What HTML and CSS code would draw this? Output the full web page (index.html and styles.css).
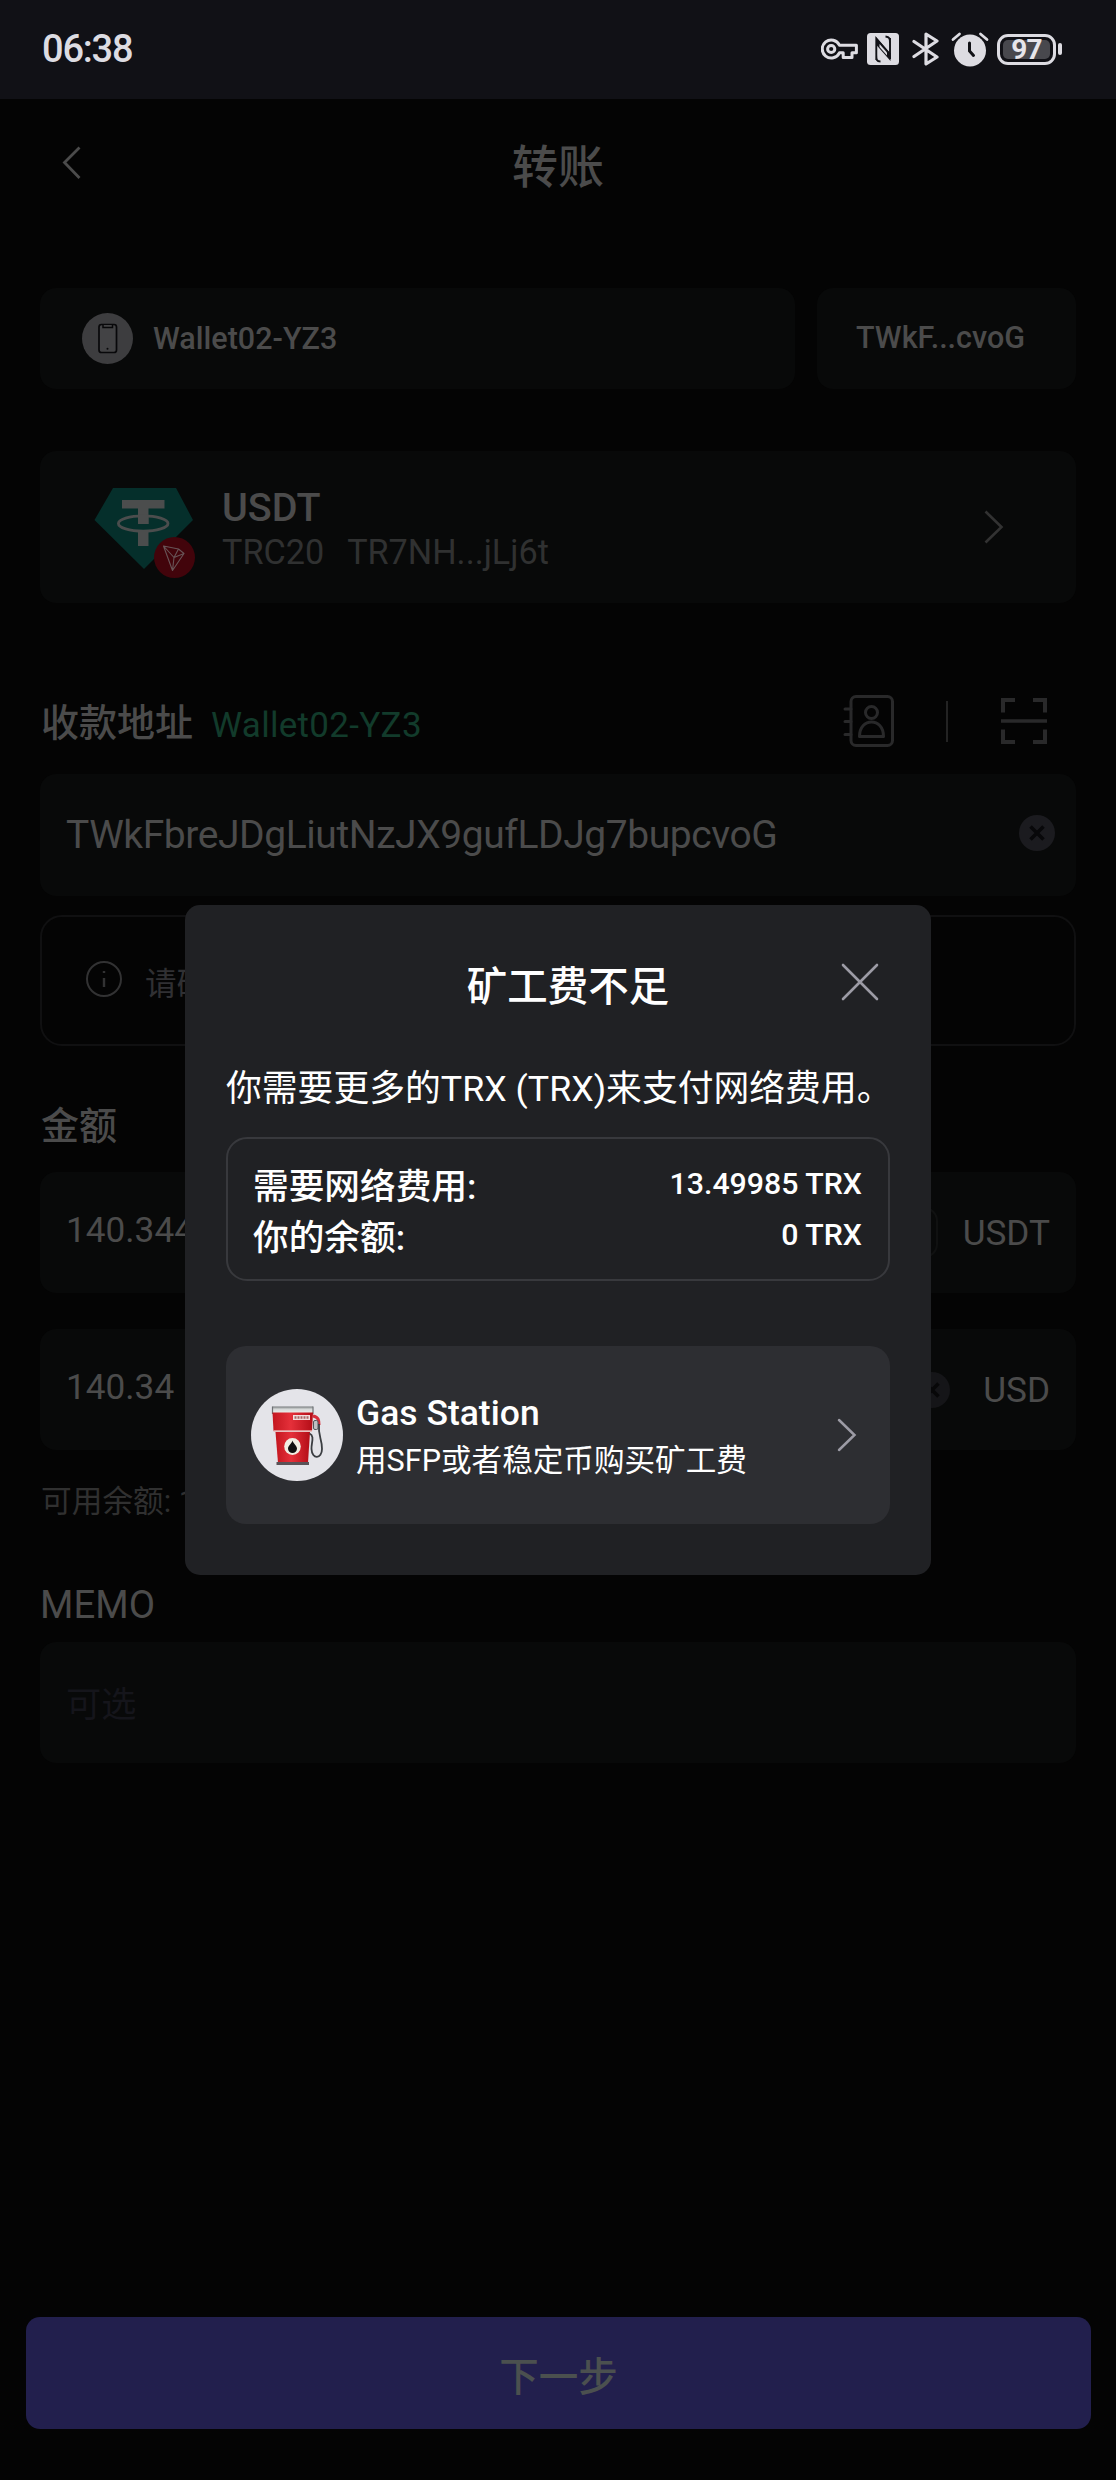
FILE: index.html
```html
<!DOCTYPE html>
<html lang="zh-CN">
<head>
<meta charset="utf-8">
<title>转账</title>
<link rel="stylesheet" href="styles.css">
</head>
<body>
<div class="screen">
  <header class="status">
    <span class="clock">06:38</span>
    <div class="status-icons">
      <svg class="i-key" width="37" height="22" viewBox="0 0 37 22" fill="none" stroke="#dddce2" stroke-width="3" stroke-linejoin="round"><path d="M18.4 7.2A9 9 0 1 0 18.4 14.8H22.2V19.6H31V14.8H35.4V7.2Z"/><circle cx="10.2" cy="11" r="3.6"/></svg>
      <svg class="i-nfc" width="32" height="32" viewBox="0 0 32 32"><rect width="32" height="32" rx="3.5" fill="#dddce2"/><path d="M13.5 28.5C9.600 28.300 9.300 26.800 9.300 22V5.500L23 21.500V10C23 5.500 22.600 3.900 18.500 3.500M9.300 5.500V27M23 26V5" fill="none" stroke="#111116" stroke-width="1.900"/><path d="M9 4L23.500 20.500V28L9 11.500Z" fill="#111116"/><path d="M12.500 11L20 19.500V22.500L12.500 14Z" fill="#dddce2"/></svg>
      <svg class="i-bt" width="28" height="34" viewBox="0 0 28 34" fill="none" stroke="#dddce2" stroke-width="3.2" stroke-linejoin="round" stroke-linecap="round"><path d="M2 9.500L25 25L14 32V2L25 9L2 24.500"/></svg>
      <svg class="i-alarm" width="38" height="36" viewBox="0 0 38 36" fill="none" stroke-linecap="round"><circle cx="19" cy="19.500" r="16" fill="#dddce2"/><path d="M2 8.500L8.500 3M29.500 3L36 8.500" stroke="#dddce2" stroke-width="2.800"/><path d="M18.500 12V20L22.500 24.500" stroke="#111116" stroke-width="3"/></svg>
      <div class="battery"><div class="battery-body"><span>97</span></div><i class="battery-tip"></i></div>
    </div>
  </header>

  <nav class="titlebar">
    <svg class="back" width="20" height="34" viewBox="0 0 20 34"><path d="M17.500 1.500L2.500 16.500L17.500 32" fill="none" stroke="#4b4b4b" stroke-width="2.800"/></svg>
    <h1>转账</h1>
  </nav>

  <main class="content">
    <section class="wallet-row">
      <div class="card wallet">
        <svg width="51" height="51" viewBox="0 0 51 51"><circle cx="25.500" cy="25.500" r="25.500" fill="#3d3d3f"/><rect x="17" y="11.500" width="17.500" height="28" rx="2.500" fill="#434345" stroke="#08080a" stroke-width="1.700"/><path d="M21 12V14.500H30.500V12" fill="#434345" stroke="#08080a" stroke-width="1.500"/><circle cx="25.500" cy="35.700" r="1" fill="#08080a"/></svg>
        <span>Wallet02-YZ3</span>
      </div>
      <div class="card short-address">TWkF...cvoG</div>
    </section>

    <section class="card token">
      <svg width="102" height="92" viewBox="0 0 102 92">
        <path d="M19 1H82L99 33L50 82L0.500 33Z" fill="#052f2b"/>
        <path d="M28 13H70.500V21.500H54.500V37H44V21.500H28Z" fill="#4b4d4d"/>
        <ellipse cx="49.200" cy="36.500" rx="24.800" ry="7.700" fill="none" stroke="#4b4d4d" stroke-width="2.800"/>
        <path d="M44 28H54.500V37H44ZM44 44H54.500V59H44Z" fill="#4b4d4d"/>
        <circle cx="80.500" cy="70.500" r="20.500" fill="#42040b"/>
        <path d="M69.500 59L84.500 62L90 66.500L78.500 83.500ZM69.500 59L80 70.500L78.500 83.500M80 70.500L90 66.500M80 70.500L84.500 62" fill="none" stroke="#685457" stroke-width="1.100" stroke-linejoin="round"/>
      </svg>
      <div class="token-info">
        <strong>USDT</strong>
        <div class="token-meta"><span>TRC20</span><span>TR7NH...jLj6t</span></div>
      </div>
      <svg class="go" width="20" height="34" viewBox="0 0 20 34"><path d="M1.500 1.500L17.500 17L1.500 32.500" fill="none" stroke="#323232" stroke-width="2.600"/></svg>
    </section>

    <section class="recipient-label">
      <h2>收款地址</h2>
      <span class="alias">Wallet02-YZ3</span>
      <svg class="book" width="52" height="52" viewBox="0 0 52 52" fill="none" stroke="#29292a" stroke-width="3" stroke-linecap="round"><rect x="8" y="1.500" width="41.500" height="49" rx="5"/><circle cx="28.500" cy="17.500" r="6"/><path d="M16.500 41.500C16.500 22 40.500 22 40.500 41.500ZM2 14H8M2 26.500H8M2 39.500H8" stroke-linejoin="round"/></svg>
      <i class="divider"></i>
      <svg class="scan" width="46" height="46" viewBox="0 0 46 46" fill="none" stroke="#29292a"><path d="M2 14.500V2H14M32 2H44V14.500M2 31.500V44H14M32 44H44V31.500" stroke-width="4"/><path d="M0 23H46" stroke-width="3.4"/></svg>
    </section>

    <div class="card field address">
      <span>TWkFbreJDgLiutNzJX9gufLDJg7bupcvoG</span>
      <svg width="36" height="36" viewBox="0 0 36 36"><circle cx="18" cy="18" r="18" fill="#1b1b1f"/><path d="M11.500 11.500L24.500 24.500M24.500 11.500L11.500 24.500" stroke="#08080a" stroke-width="3.6"/></svg>
    </div>

    <div class="notice">
      <svg width="38" height="38" viewBox="0 0 38 38" fill="none" stroke="#323233"><circle cx="19" cy="19" r="17" stroke-width="2"/><path d="M19 18V27M19 11V13" stroke-width="2.400"/></svg>
      <span>请确</span>
    </div>

    <h2 class="amount-label">金额</h2>
    <div class="card field amount">
      <span>140.344</span><i class="max"></i><em>USDT</em>
    </div>
    <div class="card field amount fiat">
      <span>140.34</span>
      <svg width="36" height="36" viewBox="0 0 36 36"><circle cx="18" cy="18" r="18" fill="#151518"/><path d="M11.500 11.500L24.500 24.500M24.500 11.500L11.500 24.500" stroke="#070708" stroke-width="3.6"/></svg>
      <em>USD</em>
    </div>
    <p class="available">可用余额: 1</p>

    <p class="memo-label">MEMO</p>
    <div class="card field memo"><span>可选</span></div>
  </main>

  <button class="next">下一步</button>

  <div class="overlay">
    <section class="modal">
      <div class="modal-head">
        <h2>矿工费不足</h2>
        <svg width="38" height="38" viewBox="0 0 38 38"><path d="M2 2L36 36M36 2L2 36" stroke="#9c9ba5" stroke-width="2.600" stroke-linecap="round"/></svg>
      </div>
      <p class="modal-text">你需要更多的TRX (TRX)来支付网络费用。</p>
      <dl class="fees">
        <div><dt>需要网络费用:</dt><dd>13.49985 TRX</dd></div>
        <div><dt>你的余额:</dt><dd>0 TRX</dd></div>
      </dl>
      <div class="gas">
        <svg class="pump" width="92" height="92" viewBox="0 0 92 92">
          <defs>
            <linearGradient id="red" x1="0" x2="1"><stop offset="0" stop-color="#c3161f"/><stop offset=".45" stop-color="#e5303a"/><stop offset="1" stop-color="#b30d17"/></linearGradient>
            <linearGradient id="cap" x1="0" x2="0" y1="0" y2="1"><stop offset="0" stop-color="#74787a"/><stop offset=".35" stop-color="#d5d8d8"/><stop offset="1" stop-color="#f4f4f1"/></linearGradient>
          </defs>
          <circle cx="46" cy="46" r="46" fill="#e4e4e9"/>
          <path d="M21.500 17.500H62L61.500 25H22Z" fill="url(#cap)"/>
          <path d="M21.500 17.500V25M62 17.500V25" stroke="#6d7173" stroke-width="1.200"/>
          <path d="M21.500 23.500H62L61 42H22.500Z" fill="url(#red)"/>
          <rect x="42" y="26" width="17" height="5" fill="#f1dfdf"/>
          <path d="M43.500 28.500H57.500" stroke="#a66" stroke-width="2.500" stroke-dasharray="2 1"/>
          <path d="M22.500 42H61" stroke="#e9b4b2" stroke-width="1.500"/>
          <path d="M24.500 43H59L57 74H27Z" fill="url(#red)"/>
          <path d="M25.500 73H58V76H25.500Z" fill="#595257"/>
          <ellipse cx="41.500" cy="57.500" rx="8.300" ry="8.500" fill="#f1eee3"/>
          <path d="M41.500 51.500C42 54.500 46 56.500 46 59.500A4.500 4.500 0 0 1 37 59.500C37 56.500 41 54.500 41.500 51.500Z" fill="#111"/>
          <path d="M62 27C68 28 68 32 68 36" fill="none" stroke="#d62e3b" stroke-width="3"/>
          <rect x="62.500" y="31.500" width="4.500" height="9" rx="1.500" fill="#bfc0c3" stroke="#55565a"/>
          <path d="M68 35C67 48 71 49 71 60C71 70 61 71 60.500 60C60.200 54 64 47 58.500 44.500" fill="none" stroke="#3b3e42" stroke-width="1.800"/>
        </svg>
        <div class="gas-text"><strong>Gas Station</strong><span>用SFP或者稳定币购买矿工费</span></div>
        <svg class="gas-go" width="20" height="34" viewBox="0 0 20 34"><path d="M2 2L17.500 17L2 32" fill="none" stroke="#9c9ba5" stroke-width="2.500" stroke-linecap="round"/></svg>
      </div>
    </section>
  </div>
</div>
</body>
</html>
```
FILE: styles.css
```css
* { box-sizing: border-box; margin: 0; padding: 0; }
body { background: #040404; font-family: Roboto, "Noto Sans CJK SC", sans-serif; color: #4b4b4b; }
svg { display: block; flex: none; }
h1, h2, strong { font-weight: 500; }
em { font-style: normal; }

.screen { position: relative; display: flex; flex-direction: column; width: 1116px; height: 2480px; overflow: hidden; background: #040404; }

.status { flex: none; display: flex; justify-content: space-between; height: 99px; padding: 0 54px 0 42px; background: #111116; }
.clock { font-size: 38px; font-weight: 500; line-height: 99px; letter-spacing: -1.2px; color: #dddce2; }
.status-icons { display: flex; align-items: center; height: 98px; }
.i-nfc { margin-left: 9px; }
.i-bt { margin-left: 13px; }
.i-alarm { margin-left: 11px; margin-right: 8px; }
.battery { display: flex; align-items: center; gap: 2px; }
.battery-body { width: 59px; height: 31px; border: 3px solid #dddce2; border-radius: 11px; padding: 3px; }
.battery-body span { display: block; height: 19px; line-height: 20px; border-radius: 5px; background: #48484d; color: #e6e5ea; font-size: 28px; font-weight: 700; text-align: center; letter-spacing: -.8px; }
.battery-tip { width: 4px; height: 12px; border-radius: 2px; background: #dddce2; }

.titlebar { flex: none; display: grid; grid-template-columns: 80px 1fr 80px; align-items: center; height: 136px; }
.back { margin: -8px 0 0 62px; }
.titlebar h1 { font-size: 46px; line-height: 60px; text-align: center; }

.content { padding: 53px 40px 0; display: flex; flex-direction: column; }
.card { background: #080909; border-radius: 16px; }

.wallet-row { display: flex; gap: 22px; height: 101px; font-size: 30.500px; font-weight: 500; }
.wallet { flex: 1; display: flex; align-items: center; gap: 20px; padding-left: 42px; }
.short-address { width: 259px; line-height: 100px; text-align: center; padding-right: 12px; }

.token { display: flex; align-items: flex-start; height: 152px; margin-top: 62px; padding: 36px 72px 0 54px; }
.token-info { margin-left: 26px; }
.token-info strong { display: block; font-size: 39.500px; line-height: 42px; }
.token-meta { display: flex; gap: 23px; margin-top: 3px; font-size: 34.200px; line-height: 40px; color: #303131; }
.go { margin: 23px 0 0 auto; }

.recipient-label { display: flex; align-items: center; height: 62px; margin-top: 87px; padding: 0 29px 0 1px; }
h2 { font-size: 38px; line-height: 62px; }
.recipient-label h2 { padding-top: 4px; }
.alias { margin: 8px 0 0 18px; font-size: 35px; color: #123b2b; letter-spacing: .3px; }
.book { margin-left: auto; }
.divider { width: 2px; height: 41px; margin: 0 53px 0 51px; background: #232323; }

.field { display: flex; align-items: center; height: 121px; padding: 0 26px; font-size: 35.200px; }
.address { height: 122px; margin-top: 22px; padding-right: 21px; justify-content: space-between; font-size: 39px; letter-spacing: -.42px; }
.address svg { margin-bottom: 4px; }
.notice { display: flex; align-items: center; gap: 22px; height: 131px; margin-top: 19px; padding: 0 0 4px 43px; border: 2px solid #101011; border-radius: 22px; font-size: 31.500px; color: #303033; }
.notice span { padding-top: 4px; }
.amount-label { height: 50px; margin: 55px 0 0 1px; line-height: 50px; }
.amount { margin-top: 21px; }
.amount span { margin-bottom: 5px; }
.max { width: 60px; height: 51px; margin-left: auto; border: 2px solid #101111; border-radius: 14px; }
.amount em { margin-left: 25px; }
.fiat { margin-top: 36px; }
.fiat svg { margin-left: auto; }
.fiat em { margin-left: 33px; padding-top: 1px; }
.available { margin: 26px 0 0 1px; font-size: 30.700px; line-height: 52px; height: 50px; color: #303030; }
.memo-label { margin: 54px 0 0 0; font-size: 38.300px; line-height: 50px; }
.memo { margin-top: 12px; padding-bottom: 3px; color: #15151b; }

.next { height: 112px; margin: auto 25px 51px 26px; padding-top: 4px; border: 0; border-radius: 14px; background: #221f4d; color: #4b504f; font: 500 39.500px/108px Roboto, "Noto Sans CJK SC", sans-serif; padding-top: 7px; padding-bottom: 0; overflow: hidden; }

.overlay { position: absolute; inset: 0; display: flex; align-items: center; justify-content: center; color: #fff; }
.modal { width: 746px; height: 670px; padding: 55px 41px 0; border-radius: 15px; background: #202124; }
.modal-head { display: grid; grid-template-columns: 69px 1fr 38px; align-items: center; height: 50px; padding-right: 11px; }
.modal-head h2 { grid-column: 2; font-size: 40.500px; line-height: 50px; padding-top: 2px; text-align: center; }
.modal-head svg { margin-bottom: 8px; }
.modal-text { height: 50px; margin-top: 53px; font-size: 35.800px; line-height: 52px; white-space: nowrap; }
.fees { height: 144px; margin-top: 24px; padding: 21px 26px 0 25px; border: 2px solid #38393d; border-radius: 21px; }
.fees div { display: flex; justify-content: space-between; height: 51px; font-weight: 500; }
.fees dt { font-size: 35.700px; line-height: 54px; }
.fees dd { font-size: 30.300px; line-height: 47px; }
.gas { display: flex; align-items: center; height: 178px; margin-top: 65px; padding: 0 33px 0 25px; border-radius: 20px; background: #2d2e32; }
.gas-text { margin-left: 13px; padding-top: 3px; }
.gas-text strong, .gas-text span { display: block; line-height: 47px; }
.gas-text strong { font-size: 35.500px; }
.gas-text span { font-size: 30.600px; }
.gas-go { margin-left: auto; }
```
